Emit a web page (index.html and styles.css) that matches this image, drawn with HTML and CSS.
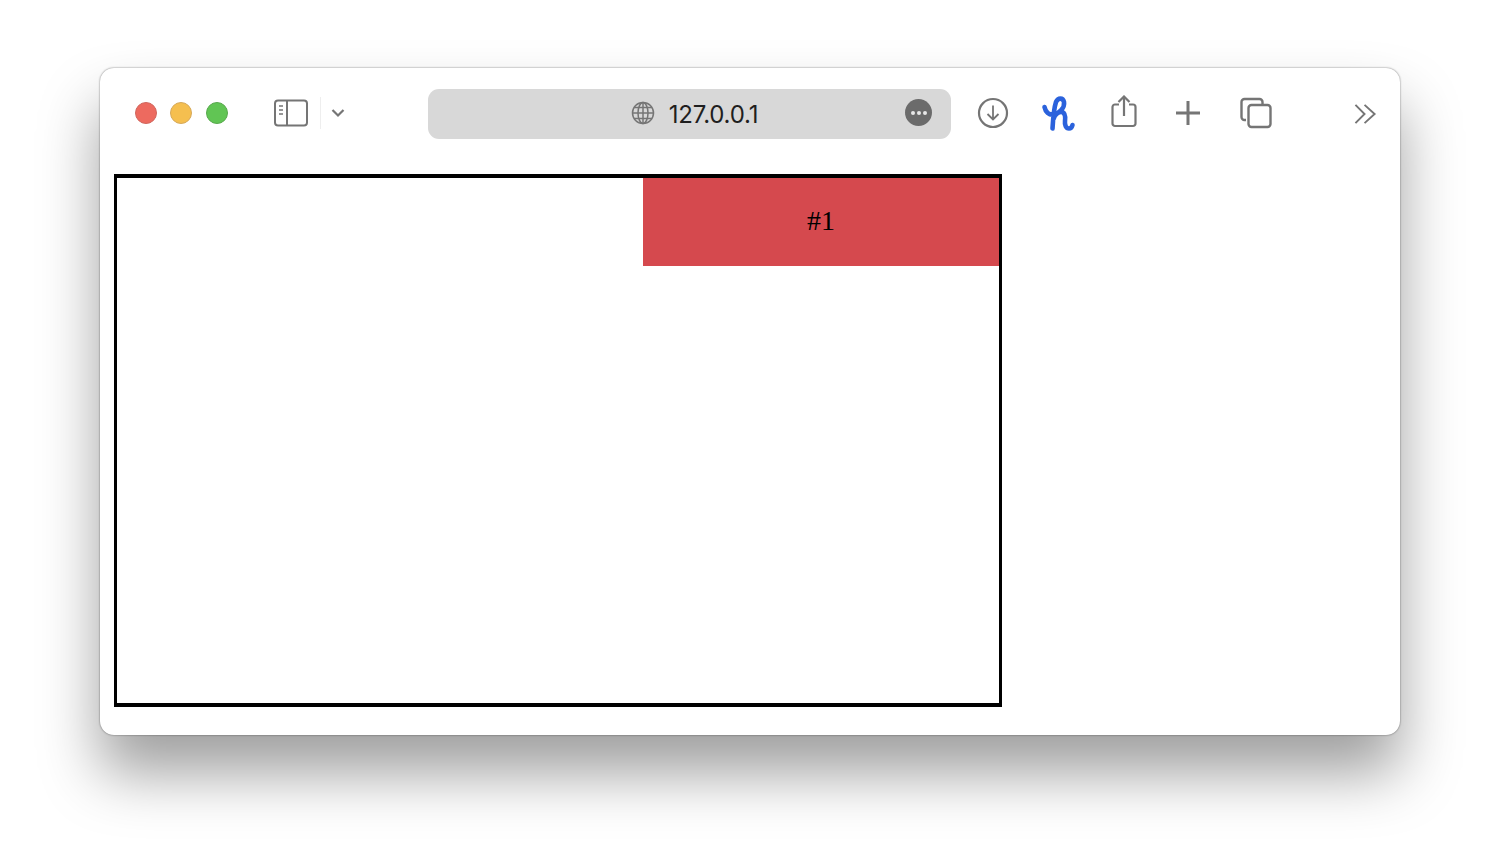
FILE: index.html
```html
<!DOCTYPE html>
<html lang="en">
<head>
    <meta charset="UTF-8">
    <meta name="viewport" content="width=device-width, initial-scale=1.0">
    <title>127.0.0.1</title>
    <link rel="stylesheet" href="styles.css">
</head>
<body>
    <div class="window">
        <div class="toolbar">
            <div class="lights">
                <span class="light red"></span>
                <span class="light yellow"></span>
                <span class="light green"></span>
            </div>
            <div class="sidebar-btn">
                <svg class="icon" width="36" height="30" viewBox="0 0 36 30" fill="none" stroke="#757575" stroke-width="2">
                    <rect x="2" y="2.500" width="32" height="25" rx="3"/>
                    <path d="M14 2.500v25"/>
                    <path d="M6 8h4M6 12h4M6 16h4" stroke-width="1.500"/>
                </svg>
                <span class="divider"></span>
                <svg class="icon" width="14" height="10" viewBox="0 0 14 10" fill="none" stroke="#757575" stroke-width="2.200">
                    <path d="M1.500 2l5.500 5.500L12.500 2"/>
                </svg>
            </div>
            <div class="address">
                <svg class="icon globe" width="24" height="24" viewBox="0 0 24 24" fill="none" stroke="#757575" stroke-width="1.500">
                    <circle cx="12" cy="12" r="10.500"/>
                    <ellipse cx="12" cy="12" rx="5" ry="10.500"/>
                    <path d="M12 1.500v21M1.500 12h21M3 6.500h18M3 17.500h18"/>
                </svg>
                <span class="url">127.0.0.1</span>
                <span class="more"><i></i><i></i><i></i></span>
            </div>
            <div class="actions">
                <svg class="icon" width="32" height="32" viewBox="0 0 32 32" fill="none" stroke="#757575" stroke-width="2.200">
                    <circle cx="16" cy="16" r="14"/>
                    <path d="M16 8.500v14M10.500 17l5.500 5.500 5.500-5.500" stroke-width="1.800"/>
                </svg>
                <svg class="icon" width="36" height="38" viewBox="0 0 36 38" fill="none" stroke="#2b62dc" stroke-width="4.600" stroke-linecap="round" stroke-linejoin="round">
                    <path d="M4.500 13C5.500 18 9 21.500 14 20.500C19 19.500 25 14 24 8C23 3.500 18 3.500 16 8C14 14 13 26 12.500 34.500M13.500 25C15 20 19 17.500 22 18C25.500 19 25.500 23 25 27C24.500 31 26 34.500 29 34.500C31 34.500 32 33 32.500 31"/>
                </svg>
                <svg class="icon share" width="28" height="34" viewBox="0 0 28 34" fill="none" stroke="#757575" stroke-width="2.200">
                    <path d="M9 9.500H5a2.500 2.500 0 0 0-2.500 2.500v16.500A2.500 2.500 0 0 0 5 31h18a2.500 2.500 0 0 0 2.500-2.500V12A2.500 2.500 0 0 0 23 9.500h-4"/>
                    <path d="M14 21V1.500M8.500 7L14 1.500 19.500 7"/>
                </svg>
                <svg class="icon plus" width="24" height="24" viewBox="0 0 24 24" fill="none" stroke="#757575" stroke-width="3">
                    <path d="M12 0v24M0 12h24"/>
                </svg>
                <svg class="icon" width="32" height="32" viewBox="0 0 32 32" fill="none" stroke="#757575" stroke-width="2.400">
                    <path d="M6 23H4.500a3 3 0 0 1-3-3V5a3 3 0 0 1 3-3h15a3 3 0 0 1 3 3v2"/>
                    <rect x="8.500" y="8" width="22" height="22" rx="3"/>
                </svg>
            </div>
            <svg class="icon overflow" width="23" height="22" viewBox="0 0 24 22" fill="none" stroke="#757575" stroke-width="2">
                <path d="M1.500 1.500L11 11l-9.500 9.500M11 1.500L21.500 11 11 20.500"/>
            </svg>
        </div>
        <div class="page">
            <div class="box">
                <div class="tag">#1</div>
            </div>
        </div>
    </div>
</body>
</html>
```

FILE: styles.css
```css
html, body {
    margin: 0;
    padding: 0;
    height: 100%;
    background-color: #ffffff;
    overflow: hidden;
}
body {
    padding: 68px 100px 0;
    box-sizing: border-box;
}
.window {
    height: 667px;
    background-color: #ffffff;
    border-radius: 14px;
    box-shadow: 0 38px 60px rgba(0, 0, 0, 0.38), 0 0 2px rgba(0, 0, 0, 0.55);
    display: flex;
    flex-direction: column;
}
.icon {
    display: block;
    flex-shrink: 0;
}
.toolbar {
    height: 90px;
    padding: 0 23px 0 35px;
    display: flex;
    align-items: center;
}
.lights {
    display: flex;
    gap: 13px;
    width: 138px;
}
.light {
    width: 22px;
    height: 22px;
    border-radius: 50%;
    box-sizing: border-box;
}
.red {
    background-color: #ed6a5f;
    border: 1px solid #d0675e;
}
.yellow {
    background-color: #f5bf4f;
    border: 1px solid #d6a95a;
}
.green {
    margin-left: 1px;
    background-color: #61c554;
    border: 1px solid #58a94d;
}
.sidebar-btn {
    display: flex;
    align-items: center;
    width: 155px;
}
.divider {
    width: 1px;
    height: 32px;
    margin: 0 10px 0 11px;
    background-color: #eeeeee;
}
.address {
    position: relative;
    width: 523px;
    height: 50px;
    margin-top: 2px;
    background-color: #d8d8d8;
    border-radius: 11px;
    display: flex;
    justify-content: center;
    align-items: center;
    gap: 14px;
    padding-left: 10px;
    box-sizing: border-box;
}
.globe {
    margin-top: -2px;
}
.url {
    font-family: Inter, "Liberation Sans", sans-serif;
    font-size: 24px;
    letter-spacing: -0.200px;
    color: #1f1f1f;
}
.more {
    position: absolute;
    right: 19px;
    top: 10px;
    width: 27px;
    height: 27px;
    border-radius: 50%;
    background-color: #6b6b6b;
    display: flex;
    justify-content: center;
    align-items: center;
    gap: 2px;
}
.more i {
    width: 4px;
    height: 4px;
    border-radius: 50%;
    background-color: #e8e8e8;
}
.actions {
    margin-left: 9px;
    display: grid;
    grid-template-columns: 66px 64px 68px 60px 76px;
    justify-items: center;
    align-items: center;
}
.share {
    margin-top: -2px;
}
.plus {
    margin-top: -1px;
}
.overflow {
    margin-left: auto;
    margin-top: 2px;
}
.page {
    padding: 16px 14px;
}
.box {
    width: 888px;
    height: 533px;
    border: 3px solid #000000;
    border-top-width: 4px;
    border-bottom-width: 4px;
    box-sizing: border-box;
    display: flex;
    justify-content: flex-end;
    align-items: flex-start;
}
.tag {
    width: 356px;
    height: 88px;
    padding-bottom: 2px;
    box-sizing: border-box;
    background-color: #d5494e;
    color: #000000;
    font-family: "Liberation Serif", serif;
    font-size: 28px;
    display: flex;
    justify-content: center;
    align-items: center;
}
```
